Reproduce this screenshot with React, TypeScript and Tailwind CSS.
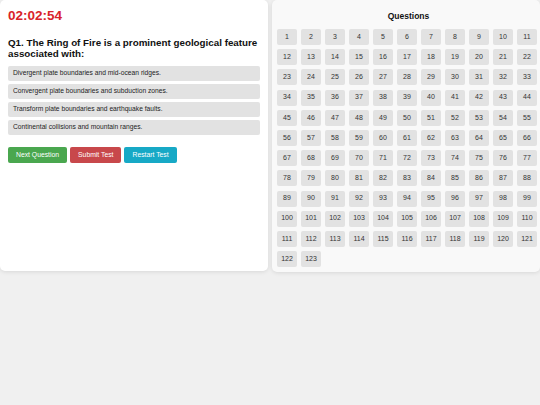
import React from "react";

const options = [
  "Divergent plate boundaries and mid-ocean ridges.",
  "Convergent plate boundaries and subduction zones.",
  "Transform plate boundaries and earthquake faults.",
  "Continental collisions and mountain ranges.",
];

export default function App() {
  const nums = Array.from({ length: 123 }, (_, i) => i + 1);
  return (
    <div
      className="w-[540px] h-[405px] bg-[#f0f0f0] flex items-start gap-[4px]"
      style={{ fontFamily: '"Liberation Sans", Arial, sans-serif' }}
    >
      <div className="w-[268px] h-[271px] bg-white rounded-[5px] shadow-[0_1px_4px_rgba(0,0,0,0.1)] px-[8px] pt-[8px]">
        <div className="text-[13.5px] font-bold text-[#d9232a] leading-[16px]">02:02:54</div>
        <div className="mt-[13px] text-[9.8px] font-bold text-[#111] leading-[11px]">
          Q1. The Ring of Fire is a prominent geological feature associated with:
        </div>
        <div className="mt-[7px] flex flex-col gap-[3px]">
          {options.map((o) => (
            <div
              key={o}
              className="h-[15px] bg-[#e2e2e2] rounded-[2px] px-[5px] flex items-center text-[6.7px] text-[#222]"
            >
              {o}
            </div>
          ))}
        </div>
        <div className="mt-[12px] flex gap-[3px]">
          <button className="h-[16px] px-[8px] rounded-[2px] bg-[#4aa74f] text-white text-[6.8px]">
            Next Question
          </button>
          <button className="h-[16px] px-[8px] rounded-[2px] bg-[#c8484b] text-white text-[6.8px]">
            Submit Test
          </button>
          <button className="h-[16px] px-[8px] rounded-[2px] bg-[#17a9c6] text-white text-[6.8px]">
            Restart Test
          </button>
        </div>
      </div>
      <div className="w-[268px] h-[272px] bg-[#f9f9f9] rounded-[5px] shadow-[0_1px_4px_rgba(0,0,0,0.1)] pl-[5px] pt-[11px]">
        <div className="text-center text-[8.5px] font-bold text-[#111] leading-[10px]">Questions</div>
        <div className="mt-[8px] grid grid-cols-[repeat(11,20px)] gap-x-[4px] gap-y-[4.2px]">
          {nums.map((n) => (
            <div
              key={n}
              className="h-[16px] bg-[#e2e2e2] rounded-[2px] flex items-center justify-center text-[7px] text-[#333]"
            >
              {n}
            </div>
          ))}
        </div>
      </div>
    </div>
  );
}
